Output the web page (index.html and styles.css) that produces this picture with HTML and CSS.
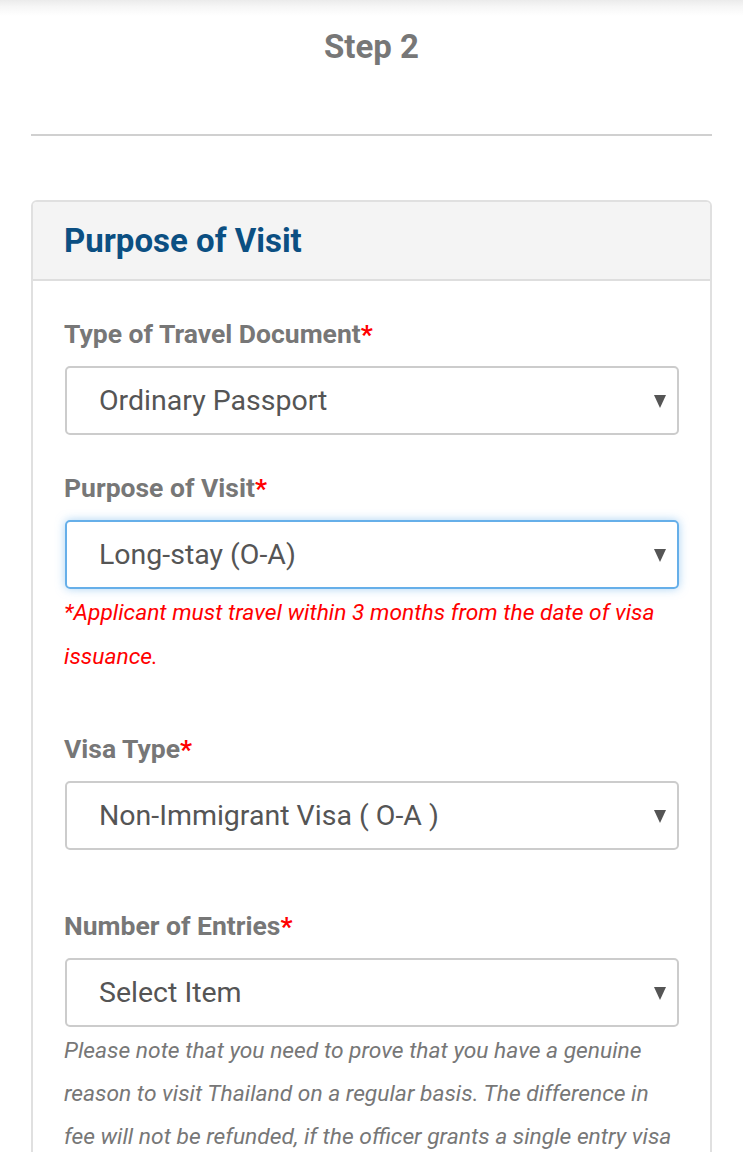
FILE: index.html
```html
<!DOCTYPE html>
<html lang="en">
<head>
<meta charset="utf-8">
<title>Step 2 - Purpose of Visit</title>
<link rel="stylesheet" href="styles.css">
</head>
<body>
<div class="top-shadow"></div>
<main class="page">
  <h2 class="step-title">Step 2</h2>
  <hr class="divider">
  <section class="panel">
    <div class="panel-heading">
      <h3 class="panel-title">Purpose of Visit</h3>
    </div>
    <div class="panel-body">
      <div class="group g1">
        <label class="label">Type of Travel Document<span class="req">*</span></label>
        <div class="select">
          <span class="select-text">Ordinary Passport</span>
          <svg class="caret" width="12" height="13" viewBox="0 0 12 13"><polygon points="0,0 12,0 6,13" fill="#555"/></svg>
        </div>
      </div>
      <div class="group g2">
        <label class="label">Purpose of Visit<span class="req">*</span></label>
        <div class="select focused">
          <span class="select-text">Long-stay (O-A)</span>
          <svg class="caret" width="12" height="13" viewBox="0 0 12 13"><polygon points="0,0 12,0 6,13" fill="#555"/></svg>
        </div>
        <p class="warn">*Applicant must travel within 3 months from the date of visa issuance.</p>
      </div>
      <div class="group g3">
        <label class="label">Visa Type<span class="req">*</span></label>
        <div class="select">
          <span class="select-text">Non-Immigrant Visa ( O-A )</span>
          <svg class="caret" width="12" height="13" viewBox="0 0 12 13"><polygon points="0,0 12,0 6,13" fill="#555"/></svg>
        </div>
      </div>
      <div class="group g4">
        <label class="label">Number of Entries<span class="req">*</span></label>
        <div class="select">
          <span class="select-text">Select Item</span>
          <svg class="caret" width="12" height="13" viewBox="0 0 12 13"><polygon points="0,0 12,0 6,13" fill="#555"/></svg>
        </div>
        <p class="note">Please note that you need to prove that you have a genuine reason to visit Thailand on a regular basis. The difference in fee will not be refunded, if the officer grants a single entry visa instead.</p>
      </div>
    </div>
  </section>
</main>
</body>
</html>
```

FILE: styles.css
```css
html, body {
  margin: 0;
  padding: 0;
  background: #fff;
  font-family: Roboto, "Liberation Sans", Arial, sans-serif;
}
body {
  position: relative;
  overflow: hidden;
  height: 1152px;
}
.top-shadow {
  position: absolute;
  top: 0;
  left: 0;
  right: 0;
  height: 16px;
  background: linear-gradient(to bottom, #ebebeb 0%, #f6f6f6 40%, rgba(255,255,255,0) 100%);
}
.page {
  padding: 0 31px;
}
.step-title {
  margin: 0;
  padding-top: 25px;
  height: 44px;
  line-height: 44px;
  text-align: center;
  font-size: 33px;
  font-weight: 700;
  color: #777;
}
.divider {
  margin: 65px 0 0;
  border: 0;
  border-top: 2px solid #d0d0d0;
  height: 0;
}
.panel {
  margin-top: 64px;
  border: 2px solid #e0e0e0;
  border-radius: 6px;
}
.panel-heading {
  background: #f4f4f4;
  border-bottom: 2px solid #dedede;
  height: 77px;
  display: flex;
  align-items: center;
  padding: 0 31px;
  border-radius: 4px 4px 0 0;
}
.panel-title {
  margin: 0;
  font-size: 33px;
  font-weight: 700;
  color: #0b4f82;
}
.panel-body {
  padding: 36px 31px 0;
}
.group {
  display: flex;
  flex-direction: column;
}
.label {
  font-size: 26.5px;
  line-height: 34px;
  font-weight: 700;
  color: #777;
  margin-bottom: 15px;
}
.req {
  color: #f00;
}
.select {
  height: 65px;
  border: 2px solid #ccc;
  border-radius: 5px;
  display: flex;
  align-items: center;
  justify-content: space-between;
  padding: 0 11px 0 32px;
  margin-left: 1px;
}
.select.focused {
  border-color: #66afe9;
  box-shadow: 0 0 10px rgba(102,175,233,0.55);
}
.select-text {
  font-size: 28.5px;
  color: #555;
}
.caret {
  display: block;
  margin-top: 1px;
}
.g1 { margin-bottom: 36px; }
.g2 { margin-bottom: 53px; }
.g3 { margin-bottom: 59px; }
.warn {
  margin: 2px 0 0;
  font-size: 22.8px;
  line-height: 44px;
  font-style: italic;
  color: #f00;
}
.note {
  margin: 2px 0 0;
  font-size: 22.8px;
  line-height: 43px;
  font-style: italic;
  color: #777;
}
```
